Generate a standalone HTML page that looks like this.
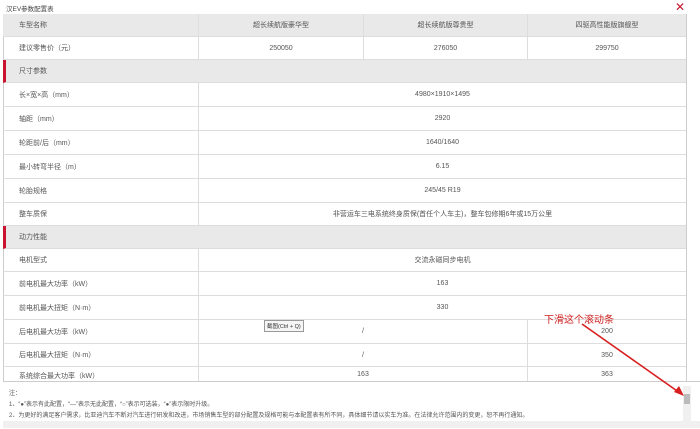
<!DOCTYPE html><html><head><meta charset="utf-8"><style>
body{margin:0;width:700px;height:428px;background:#fff;position:relative;overflow:hidden;font-family:"Liberation Sans","Noto Sans CJK SC",sans-serif;font-size:7px;color:#555}
.a{position:absolute}
.r{position:absolute;left:3px;width:683px;border-bottom:1px solid #ddd;box-sizing:border-box}
.c{position:absolute;top:0;bottom:0;display:flex;align-items:center;justify-content:center;border-left:1px solid #ddd;box-sizing:border-box}
.l{position:absolute;left:16px;top:0;bottom:0;display:flex;align-items:center}
.g{background:#e9e9e9}
.s{border-left:3px solid #c8142e}
</style></head><body>
<div class="a" style="left:6px;top:3px;font-size:6.5px;color:#444">汉EV参数配置表</div>
<div class="a" style="left:675px;top:0px;color:#c8142e;font-size:12px">✕</div>
<div class="a" style="left:3px;top:14px;width:684px;height:367px;border-left:1px solid #ccc;border-right:1px solid #ccc;border-top:1px solid #ccc;box-sizing:border-box"></div>

<div class="r g" style="top:14px;height:23px"><div class="l">车型名称</div><div class="c" style="left:195px;width:165px;border-color:#e0e0e0">超长续航版豪华型</div><div class="c" style="left:360px;width:164px">超长续航版尊贵型</div><div class="c" style="left:524px;width:159px">四驱高性能版旗舰型</div></div>
<div class="r" style="top:37px;height:23px"><div class="l">建议零售价（元）</div><div class="c" style="left:195px;width:165px">250050</div><div class="c" style="left:360px;width:164px">276050</div><div class="c" style="left:524px;width:159px">299750</div></div>
<div class="r g s" style="top:60px;height:23px"><div class="l" style="left:13px">尺寸参数</div></div>
<div class="r" style="top:83px;height:24px"><div class="l">长×宽×高（mm）</div><div class="c" style="left:195px;width:488px">4980×1910×1495</div></div>
<div class="r" style="top:107px;height:24px"><div class="l">轴距（mm）</div><div class="c" style="left:195px;width:488px">2920</div></div>
<div class="r" style="top:131px;height:24px"><div class="l">轮距前/后（mm）</div><div class="c" style="left:195px;width:488px">1640/1640</div></div>
<div class="r" style="top:155px;height:24px"><div class="l">最小转弯半径（m）</div><div class="c" style="left:195px;width:488px">6.15</div></div>
<div class="r" style="top:179px;height:24px"><div class="l">轮胎规格</div><div class="c" style="left:195px;width:488px">245/45 R19</div></div>
<div class="r" style="top:203px;height:23px"><div class="l">整车质保</div><div class="c" style="left:195px;width:488px">非营运车三电系统终身质保(首任个人车主)，整车包修期6年或15万公里</div></div>
<div class="r g s" style="top:226px;height:23px"><div class="l" style="left:13px">动力性能</div></div>
<div class="r" style="top:249px;height:23px"><div class="l">电机型式</div><div class="c" style="left:195px;width:488px">交流永磁同步电机</div></div>
<div class="r" style="top:272px;height:24px"><div class="l">前电机最大功率（kW）</div><div class="c" style="left:195px;width:488px">163</div></div>
<div class="r" style="top:296px;height:24px"><div class="l">前电机最大扭矩（N·m）</div><div class="c" style="left:195px;width:488px">330</div></div>
<div class="r" style="top:320px;height:24px"><div class="l">后电机最大功率（kW）</div><div class="c" style="left:195px;width:329px">/</div><div class="c" style="left:524px;width:159px">200</div></div>
<div class="r" style="top:344px;height:23px"><div class="l">后电机最大扭矩（N·m）</div><div class="c" style="left:195px;width:329px">/</div><div class="c" style="left:524px;width:159px">350</div></div>
<div class="r" style="top:367px;height:14px;border-bottom:none;overflow:hidden"><div class="l" style="top:4px">系统综合最大功率（kW）</div><div class="c" style="left:195px;width:329px;align-items:flex-start;padding-top:4px">163</div><div class="c" style="left:524px;width:159px;align-items:flex-start;padding-top:4px">363</div></div>

<div class="a" style="left:3px;top:381px;width:697px;height:47px;border-top:1px solid #ccc;background:#fff"></div>
<div class="a" style="left:9px;top:388px;font-size:6px">注：</div>
<div class="a" style="left:9px;top:399px;font-size:6px">1、“●”表示有此配置，“—”表示无此配置，“○”表示可选装，“●”表示限时升级。</div>
<div class="a" style="left:9px;top:410px;font-size:6px">2、为更好的满足客户需求，比亚迪汽车不断对汽车进行研发和改进，市场销售车型的部分配置及规格可能与本配置表有所不同，具体细节请以实车为准。在法律允许范围内的变更，恕不再行通知。</div>
<div class="a" style="left:3px;top:421px;width:697px;height:7px;background:#f0f0f0"></div>
<div class="a" style="left:683px;top:386px;width:8px;height:42px;background:#f0f0f0"></div>
<div class="a" style="left:684px;top:394px;width:6px;height:10px;background:#bbb"></div>

<div class="a" style="left:264px;top:320px;padding:1px 2px;border:1px solid #999;background:#f6f6f6;font-size:5.5px;color:#333">截图(Ctrl + Q)</div>
<div class="a" style="left:544px;top:311px;font-size:10px;color:#d02020">下滑这个滚动条</div>
<svg class="a" style="left:0;top:0" width="700" height="428"><line x1="582" y1="324" x2="680" y2="393" stroke="#d82020" stroke-width="1.6"/><polygon points="684,396 674,392 679,386" fill="#d82020"/></svg>
</body></html>
